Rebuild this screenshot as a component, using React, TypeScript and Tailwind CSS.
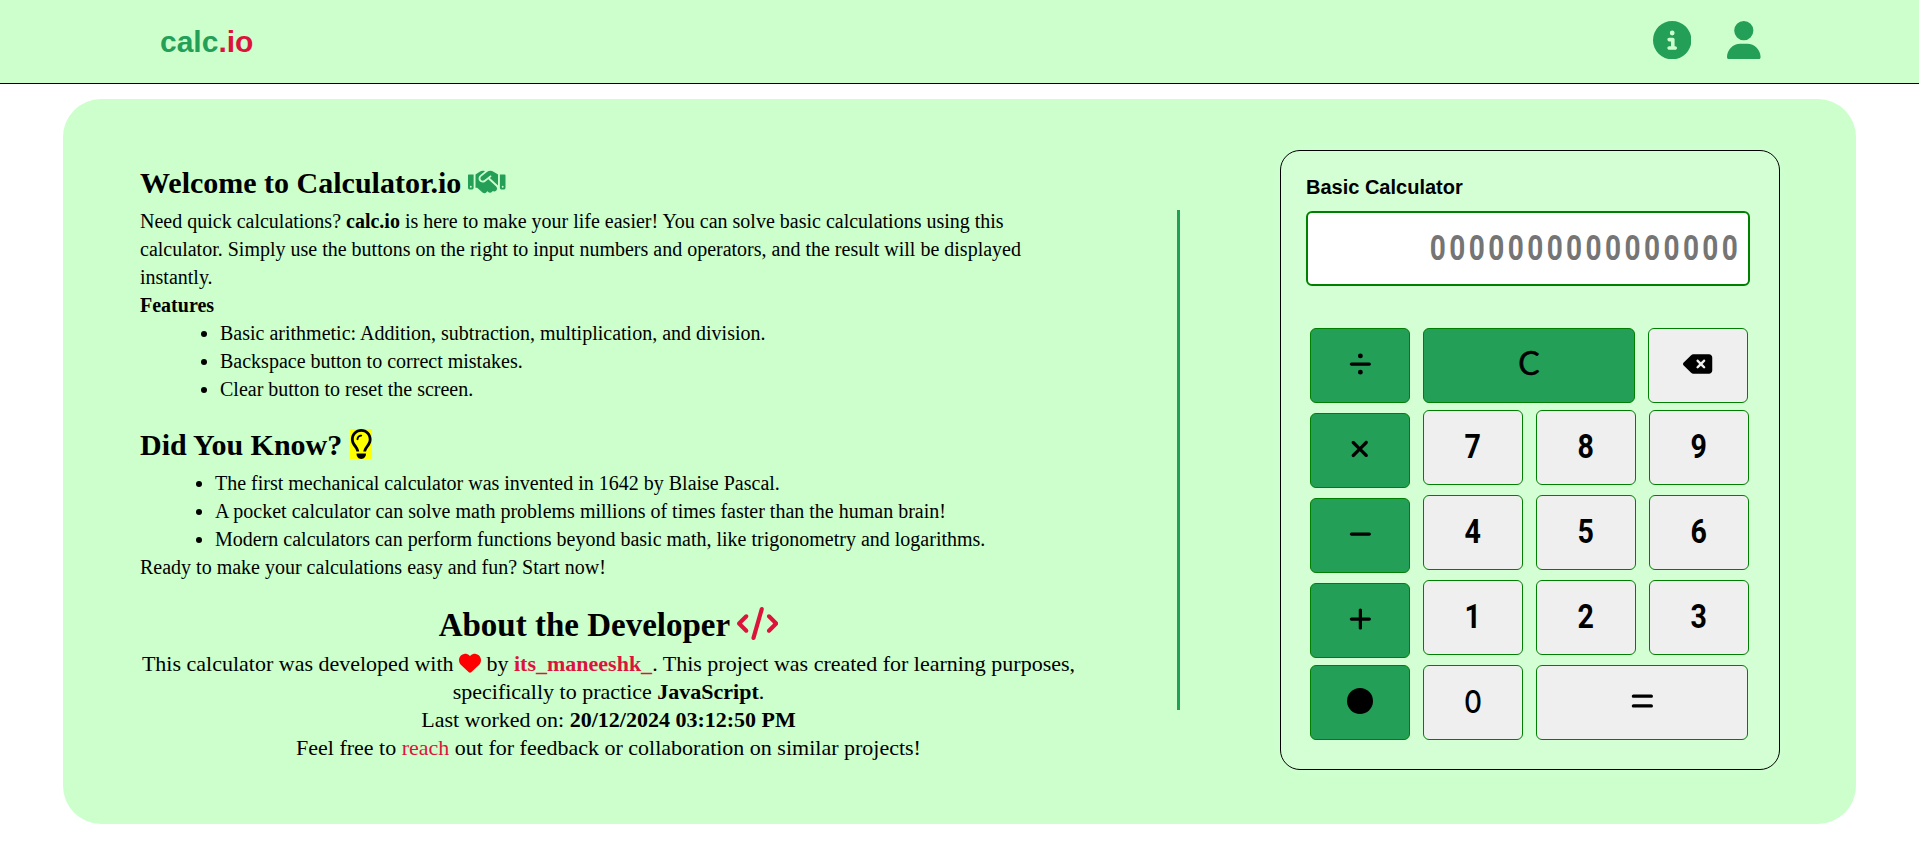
import type { ReactNode } from "react";
import {
  FaCircle,
  FaCircleInfo,
  FaCode,
  FaDeleteLeft,
  FaDivide,
  FaEquals,
  FaHandshake,
  FaHeart,
  FaMinus,
  FaPlus,
  FaRegLightbulb,
  FaUser,
  FaXmark,
} from "react-icons/fa6";

type KeyProps = { label: string; accent?: boolean; width?: string; children: ReactNode };

function Key({ label, accent = false, width = "w-[100px]", children }: KeyProps) {
  return (
    <button
      aria-label={label}
      className={`flex h-[75px] shrink-0 items-center justify-center rounded-md border border-[#008000] pb-[3px] text-black ${width} ${
        accent ? "bg-[#249f57]" : "bg-[#efefef]"
      }`}
    >
      {children}
    </button>
  );
}

function Digit({ value }: { value: string }) {
  return (
    <Key label={value}>
      <span className="inline-block scale-x-[0.84] font-['Roboto',sans-serif] text-[34px] font-bold leading-none">{value}</span>
    </Key>
  );
}

const icon = "h-[26px] w-[22.75px]";

function Calculator() {
  return (
    <section className="h-[620px] w-[500px] shrink-0 rounded-[20px] border border-black bg-[#d4ffd4] px-[25px] pt-[25px] shadow-[0_0_30px_rgba(255,255,255,0.12)]">
      <h2 className="font-['Liberation_Sans',Arial,sans-serif] text-[20px] font-bold leading-[23px]">Basic Calculator</h2>
      <div className="mt-3 flex h-[75px] w-[444px] items-center justify-end rounded-md border-2 border-[#008000] bg-white pr-[7px]">
        <span className="inline-block origin-right scale-x-[0.8] font-['Roboto',sans-serif] text-[35px] font-bold leading-none tracking-[4.25px] text-[#757575]">
          0000000000000000
        </span>
      </div>
      <div className="ml-1 mt-[42px] flex gap-[13px]">
        <div className="flex flex-col gap-[10px]">
          <Key label="Divide" accent><FaDivide className={icon} /></Key>
          <Key label="Multiply" accent><FaXmark className="h-[26px] w-[19.5px]" /></Key>
          <Key label="Subtract" accent><FaMinus className={icon} /></Key>
          <Key label="Add" accent><FaPlus className={icon} /></Key>
          <div className="-mt-[3px]">
            <Key label="Decimal point" accent><FaCircle className="size-[26px]" /></Key>
          </div>
        </div>
        <div className="flex flex-col gap-[10px]">
          <div className="-mb-[3px] flex gap-[13px]">
            <Key label="Clear" accent width="w-[212px]">
              <span className="-mt-[2px] font-['Lato',sans-serif] text-[32px] leading-none [-webkit-text-stroke:0.5px_black]">C</span>
            </Key>
            <Key label="Backspace"><FaDeleteLeft className="h-[26px] w-[29.25px]" /></Key>
          </div>
          <div className="flex gap-[13px]"><Digit value="7" /><Digit value="8" /><Digit value="9" /></div>
          <div className="flex gap-[13px]"><Digit value="4" /><Digit value="5" /><Digit value="6" /></div>
          <div className="flex gap-[13px]"><Digit value="1" /><Digit value="2" /><Digit value="3" /></div>
          <div className="flex gap-[13px]">
            <Key label="0">
              <span className="inline-block scale-x-90 font-['Inter',sans-serif] text-[31px] font-medium leading-none">0</span>
            </Key>
            <Key label="Equals" width="w-[212px]"><FaEquals className={icon} /></Key>
          </div>
        </div>
      </div>
    </section>
  );
}

export default function App() {
  return (
    <div className="min-h-[860px] bg-white font-['Liberation_Serif','Times_New_Roman',serif] text-black">
      <header className="flex h-[84px] items-center justify-between border-b border-black bg-[#ccffcc] pb-[3px] pl-[160px] pr-[158px]">
        <div className="pt-[3px] font-['Liberation_Sans',Arial,sans-serif] text-[30px] font-bold leading-none text-[#249f57]">
          calc<span className="text-[#dc143c]">.io</span>
        </div>
        <nav className="flex gap-9 text-[#249f57]">
          <FaCircleInfo className="size-[38.4px]" />
          <FaUser className="h-[38.4px] w-[33.6px]" />
        </nav>
      </header>

      <main className="ml-[63px] mt-[15px] flex h-[725px] w-[1793px] items-start rounded-[38px] bg-[#ccffcc]">
        <article className="ml-[77px] mt-[62px] w-[937px] text-[20px] leading-[28px]">
          <h1 className="mb-[2px] flex h-[44px] items-center gap-[7px] text-[30px] font-bold">
            Welcome to Calculator.io
            <FaHandshake className="mb-[3px] h-[30px] w-[37.5px] text-[#249f57]" />
          </h1>
          <p>
            Need quick calculations? <b>calc.io</b> is here to make your life easier! You can solve basic calculations using this
            calculator. Simply use the buttons on the right to input numbers and operators, and the result will be displayed
            instantly.
          </p>
          <p className="font-bold">Features</p>
          <ul className="list-disc pl-[80px]">
            <li>Basic arithmetic: Addition, subtraction, multiplication, and division.</li>
            <li>Backspace button to correct mistakes.</li>
            <li>Clear button to reset the screen.</li>
          </ul>

          <h2 className="mt-[18px] flex h-[48px] items-center gap-[7.5px] text-[30px] font-bold">
            Did You Know?
            <FaRegLightbulb className="mb-[2px] h-[30px] w-[22.5px] bg-[#ffff00]" />
          </h2>
          <ul className="list-disc pl-[75px]">
            <li>The first mechanical calculator was invented in 1642 by Blaise Pascal.</li>
            <li>A pocket calculator can solve math problems millions of times faster than the human brain!</li>
            <li>Modern calculators can perform functions beyond basic math, like trigonometry and logarithms.</li>
          </ul>
          <p>Ready to make your calculations easy and fun? Start now!</p>

          <section className="text-center text-[22px]">
            <h2 className="mt-[19px] flex h-[50px] items-center justify-center gap-[7px] text-[33px] font-bold">
              About the Developer
              <FaCode className="mb-[3px] h-[33px] w-[41.25px] text-[#dc143c]" />
            </h2>
            <p>
              This calculator was developed with <FaHeart className="-mt-[5px] inline size-[22px] align-middle text-[#ff0000]" /> by{" "}
              <b className="text-[#dc143c]">its_maneeshk_</b>. This project was created for learning purposes, specifically to
              practice <b>JavaScript</b>.
            </p>
            <p>
              Last worked on: <b>20/12/2024 03:12:50 PM</b>
            </p>
            <p>
              Feel free to <span className="text-[#dc143c]">reach</span> out for feedback or collaboration on similar projects!
            </p>
          </section>
        </article>

        <div className="ml-[100px] mt-[111px] h-[500px] w-[3px] shrink-0 bg-[#249f57]" />
        <div className="ml-[100px] mt-[51px]">
          <Calculator />
        </div>
      </main>
    </div>
  );
}
